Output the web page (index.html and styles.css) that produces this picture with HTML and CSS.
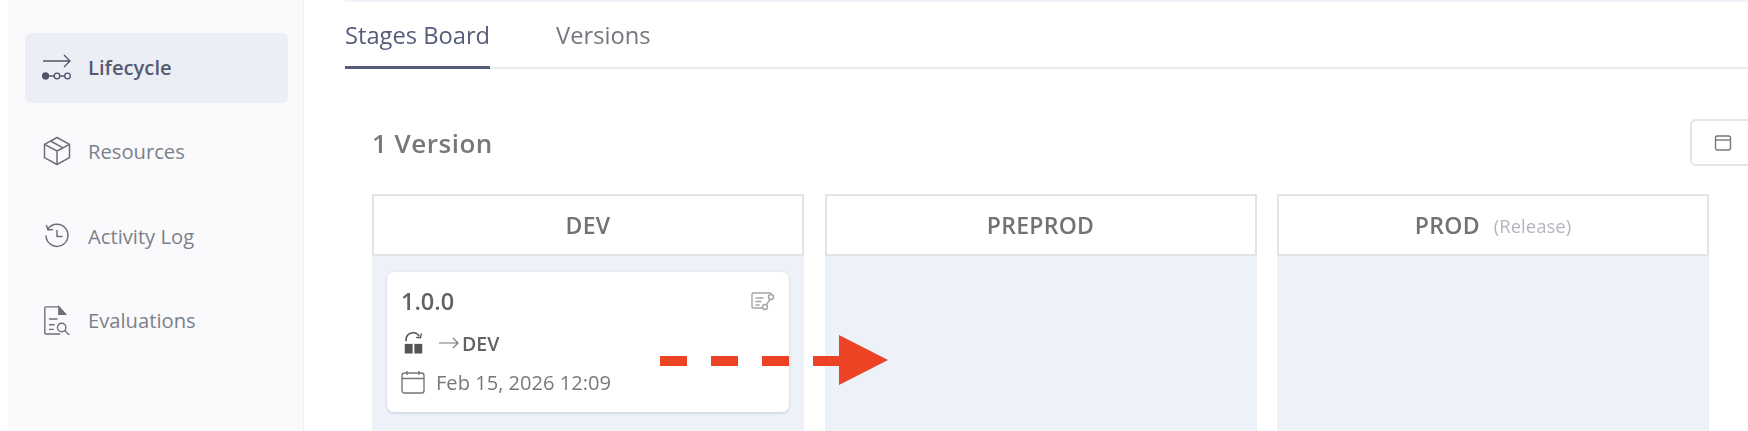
FILE: index.html
```html
<!DOCTYPE html>
<html lang="en">
<head>
  <meta charset="UTF-8" />
  <title>Stages Board</title>
  <link rel="stylesheet" href="styles.css">
</head>
<body>
  <div class="page">
    <aside class="sidebar">
      <a class="navitem active">
        <svg class="navicon" viewBox="0 0 30 30" fill="none" stroke="#4f5568" stroke-width="1.3">
          <path d="M1 9h27M22 3l6 6-6 6"/>
          <circle cx="3.5" cy="24" r="3" fill="#4f5568"/>
          <circle cx="15" cy="24" r="2.8"/>
          <circle cx="25.5" cy="24" r="2.8"/>
          <path d="M6 24h6M18 24h5"/>
        </svg>
        <span>Lifecycle</span>
      </a>
      <a class="navitem">
        <svg class="navicon" viewBox="0 0 30 30" fill="none" stroke="#6b6f78" stroke-width="1.5" stroke-linejoin="round">
          <path d="M15 1.5l12.5 6.8v13.4L15 28.5 2.5 21.700V8.300z"/>
          <path d="M2.500 8.300L15 15l12.500-6.700M15 15v13.500M8.500 5l12.500 6.800"/>
        </svg>
        <span>Resources</span>
      </a>
      <a class="navitem">
        <svg class="navicon" viewBox="0 0 30 30" fill="none" stroke="#6b6f78" stroke-width="1.5" stroke-linecap="round">
          <path d="M6 8a11 11 0 1 1-2 7"/>
          <path d="M4.500 4.500L6 9l4.500-.5M15 9.500v6h5"/>
        </svg>
        <span>Activity Log</span>
      </a>
      <a class="navitem">
        <svg class="navicon" viewBox="0 0 30 32" fill="none" stroke="#6b6f78" stroke-width="1.5" stroke-linecap="round">
          <path d="M24 10L17 2H3.500A1.500 1.500 0 0 0 2 3.500v26A1.500 1.500 0 0 0 3.500 31H18"/>
          <path d="M17 2l7 8h-7z" fill="#6b6f78"/>
          <path d="M7 15h8M7 21h5M7 26h4"/>
          <circle cx="20" cy="24" r="4.500"/>
          <path d="M23.500 27.500L28 32"/>
        </svg>
        <span>Evaluations</span>
      </a>
    </aside>

    <main class="main">
      <div class="topline"></div>
      <nav class="tabs">
        <a class="tab current">Stages Board</a>
        <a class="tab">Versions</a>
      </nav>

      <section class="board">
        <div class="boardhead">
          <h2>1 Version</h2>
          <button class="datebtn">
            <svg viewBox="0 0 18 18" fill="none" stroke="#777" stroke-width="1.4">
              <rect x="1.500" y="2" width="15" height="14" rx="2"/>
              <path d="M1.500 6h15"/>
            </svg>
          </button>
        </div>

        <div class="columns">
          <div class="column">
            <div class="colhead">DEV</div>
            <div class="colbody">
              <div class="card">
                <div class="cardtop">
                  <span class="version">1.0.0</span>
                  <svg class="certicon" viewBox="0 0 24 20" fill="none" stroke="#a4a6aa" stroke-width="1.400" stroke-linecap="round">
                    <path d="M20 2H2.500A1.500 1.500 0 0 0 1 3.500v12A1.500 1.500 0 0 0 2.500 17H11"/>
                    <path d="M5 7h7M5 10.500h5M5 14h3"/>
                    <circle cx="20" cy="6" r="2.500"/>
                    <circle cx="14" cy="16" r="2.500"/>
                    <path d="M19 8.500l-3.500 5"/>
                  </svg>
                </div>
                <div class="cardrow">
                  <svg class="lockicon" viewBox="0 0 24 26" fill="none">
                    <path d="M3.500 11V9a8 8 0 0 1 15-3.500" stroke="#555" stroke-width="1.800"/>
                    <path d="M15 6.500l5 .5 1-5" stroke="#555" stroke-width="1.500"/>
                    <rect x="2" y="14" width="9" height="11" fill="#555"/>
                    <rect x="13" y="14" width="9" height="11" fill="#555"/>
                  </svg>
                  <svg class="arrowicon" viewBox="0 0 20 12" fill="none" stroke="#777" stroke-width="1.100">
                    <path d="M0 6h19M14 1l5 5-5 5"/>
                  </svg>
                  <b>DEV</b>
                </div>
                <div class="cardrow date">
                  <svg class="calicon" viewBox="0 0 24 24" fill="none" stroke="#777" stroke-width="1.400">
                    <rect x="1" y="3" width="22" height="20" rx="2.500"/>
                    <path d="M1 8.500h22M6 1v4M18 1v4"/>
                  </svg>
                  <span>Feb 15, 2026 12:09</span>
                </div>
              </div>
            </div>
          </div>

          <div class="column">
            <div class="colhead">PREPROD</div>
            <div class="colbody"></div>
          </div>

          <div class="column">
            <div class="colhead">PROD <small>(Release)</small></div>
            <div class="colbody"></div>
          </div>
        </div>
      </section>
    </main>
  </div>

  <svg class="callout" viewBox="0 0 230 52">
    <path d="M0 26H180" stroke="#ec4324" stroke-width="10" stroke-dasharray="27 24" fill="none"/>
    <path d="M179 0l49 25-49 25z" fill="#ec4324"/>
  </svg>
</body>
</html>
```

FILE: styles.css
```css
*{
  padding: 0;
  margin: 0;
  box-sizing: border-box;
}
html, body{
  height: 100%;
  overflow: hidden;
}
body{
  background-color: white;
  font-family: "Open Sans", "Noto Sans", sans-serif;
  position: relative;
}
.page{
  display: flex;
  height: 431px;
  filter: blur(0.4px);
}

.sidebar{
  width: 295px;
  margin-left: 9px;
  padding: 33px 15px 0;
  background-color: #fafafd;
  border-right: 1px solid #f0f1f5;
  border-left: 1px solid #f4f5f8;
  display: flex;
  flex-direction: column;
  gap: 14.500px;
  flex-shrink: 0;
}
.navitem{
  display: flex;
  align-items: center;
  gap: 16px;
  height: 70px;
  padding-left: 17px;
  padding-bottom: 3px;
  border-radius: 6px;
  font-size: 20.200px;
  color: #7c8089;
}
.navitem.active{
  background-color: #eceef6;
  color: #555b70;
  font-weight: 600;
}
.navicon{
  width: 30px;
  height: 30px;
  flex-shrink: 0;
}

.main{
  flex: 1;
  min-width: 0;
  padding-left: 41px;
  position: relative;
}
.topline{
  height: 2px;
  background-color: #f0f4fa;
}
.tabs{
  display: flex;
  gap: 66px;
  height: 67px;
  border-bottom: 2px solid #e8ebf1;
}
.tab{
  height: 67px;
  padding: 16px 0 0;
  font-size: 23.700px;
  line-height: 34px;
  color: #73767c;
}
.tab.current{
  color: #555d7b;
  border-bottom: 3px solid #555d7b;
}

.board{
  padding: 0 0 0 27px;
}
.boardhead{
  display: flex;
  align-items: center;
  justify-content: space-between;
  height: 125px;
  padding-top: 22px;
}
.boardhead h2{
  font-size: 26px;
  font-weight: 600;
  letter-spacing: 0.5px;
  color: #76787c;
}
.datebtn{
  width: 80px;
  height: 47px;
  margin-right: -22px;
  padding-left: 22px;
  flex-shrink: 0;
  text-align: left;
  background-color: white;
  border: 2px solid #e3e5ea;
  border-radius: 6px;
}
.datebtn svg{
  width: 18px;
  height: 18px;
  display: block;
}

.columns{
  display: flex;
  gap: 20.500px;
}
.column{
  width: 432px;
}
.colhead{
  display: flex;
  align-items: center;
  justify-content: center;
  gap: 14px;
  height: 62px;
  border: 2px solid #e3e4ea;
  font-size: 23px;
  font-weight: 600;
  color: #707276;
  letter-spacing: 0.3px;
}
.colhead small{
  font-size: 18.500px;
  font-weight: 400;
  color: #b4b6bd;
  letter-spacing: 0;
}
.colbody{
  height: 175px;
  padding: 16px 15px 0;
  background-color: #edf1f8;
}

.card{
  height: 140px;
  padding: 13px 14px;
  background-color: white;
  border-radius: 7px;
  box-shadow: 0 1px 3px rgba(60, 70, 100, 0.22);
}
.cardtop{
  display: flex;
  align-items: center;
  justify-content: space-between;
  height: 32px;
}
.version{
  font-size: 23.500px;
  font-weight: 600;
  color: #606266;
}
.certicon{
  width: 24px;
  height: 20px;
}
.cardrow{
  display: flex;
  align-items: center;
  height: 34px;
  margin-top: 9px;
  font-size: 19.500px;
  color: #606266;
}
.cardrow b{
  font-weight: 600;
  margin-left: 3px;
}
.cardrow.date{
  margin-top: 5px;
  font-size: 20.100px;
  color: #77797e;
  gap: 11px;
}
.lockicon{
  width: 21px;
  height: 24px;
  margin-left: 2px;
}
.arrowicon{
  width: 20px;
  height: 12px;
  margin-left: 15px;
}
.calicon{
  width: 24px;
  height: 24px;
}

.callout{
  position: absolute;
  left: 660px;
  top: 335px;
  width: 230px;
  height: 52px;
}
```
